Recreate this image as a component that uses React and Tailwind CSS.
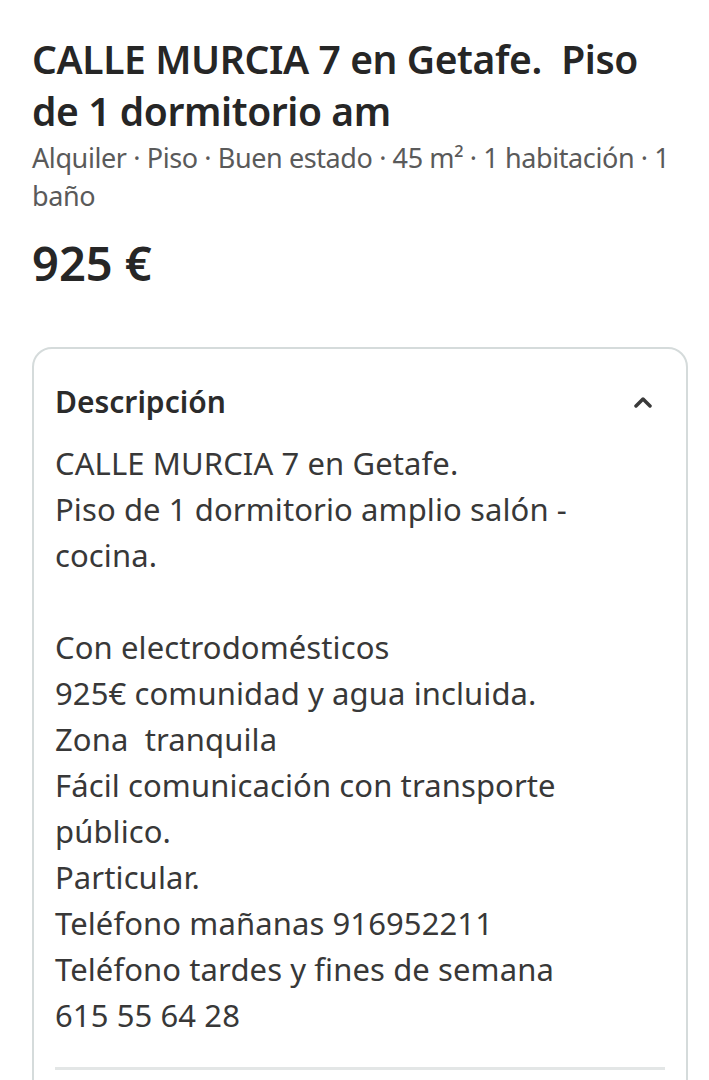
const lineas = [
  "CALLE MURCIA 7 en Getafe.",
  "Piso de 1 dormitorio amplio salón -",
  "cocina.",
  "",
  "Con electrodomésticos",
  "925€ comunidad y agua incluida.",
  "Zona  tranquila",
  "Fácil comunicación con transporte",
  "público.",
  "Particular.",
  "Teléfono mañanas 916952211",
  "Teléfono tardes y fines de semana",
  "615 55 64 28",
];

export default function App() {
  return (
    <div
      className="w-[709px] h-[1080px] overflow-hidden bg-white text-[#2b2b2b]"
      style={{ fontFamily: '"Noto Sans", "Open Sans", sans-serif' }}
    >
      <div className="pl-8 pr-[21px] pt-[33px]">
        {/* TITULO */}
        <h1 className="max-w-[630px] text-[39px] leading-[52px] font-semibold tracking-[-0.4px] text-[#262626]">
          CALLE MURCIA 7 en Getafe.&nbsp; Piso de 1 dormitorio am
        </h1>
        <p className="mt-[2px] max-w-[645px] text-[27px] leading-[38px] text-[#5a5a5a] tracking-[-0.4px]">
          Alquiler · Piso · Buen estado · 45 m² · 1 habitación · 1 baño
        </p>
        <p className="mt-[22px] text-[47px] leading-[52px] font-semibold text-[#262626]">
          925 €
        </p>

        {/* DESCRIPCION */}
        <div className="mt-[58px] border-2 border-[#d5dbdb] rounded-[20px] px-[21px] pt-[33px]">
          <div className="flex items-center justify-between">
            <span className="text-[30px] leading-[40px] font-semibold text-[#2b2b2b]">
              Descripción
            </span>
            <svg width="20" height="12" viewBox="0 0 20 12" className="mr-[12px]">
              <polyline
                points="3,10 10,3 17,10"
                fill="none"
                stroke="#3a3a3a"
                strokeWidth="3.5"
                strokeLinecap="round"
                strokeLinejoin="round"
              />
            </svg>
          </div>
          <div className="mt-[18px] text-[31px] leading-[46px] text-[#383838] tracking-[0.1px]">
            {lineas.map((l, i) => (
              <div key={i} className="h-[46px] whitespace-pre">
                {l}
              </div>
            ))}
          </div>
          <div className="mt-[29px] border-t-[3px] border-[#e3e6e6]" />
          <div className="h-[60px]" />
        </div>
      </div>
    </div>
  );
}
